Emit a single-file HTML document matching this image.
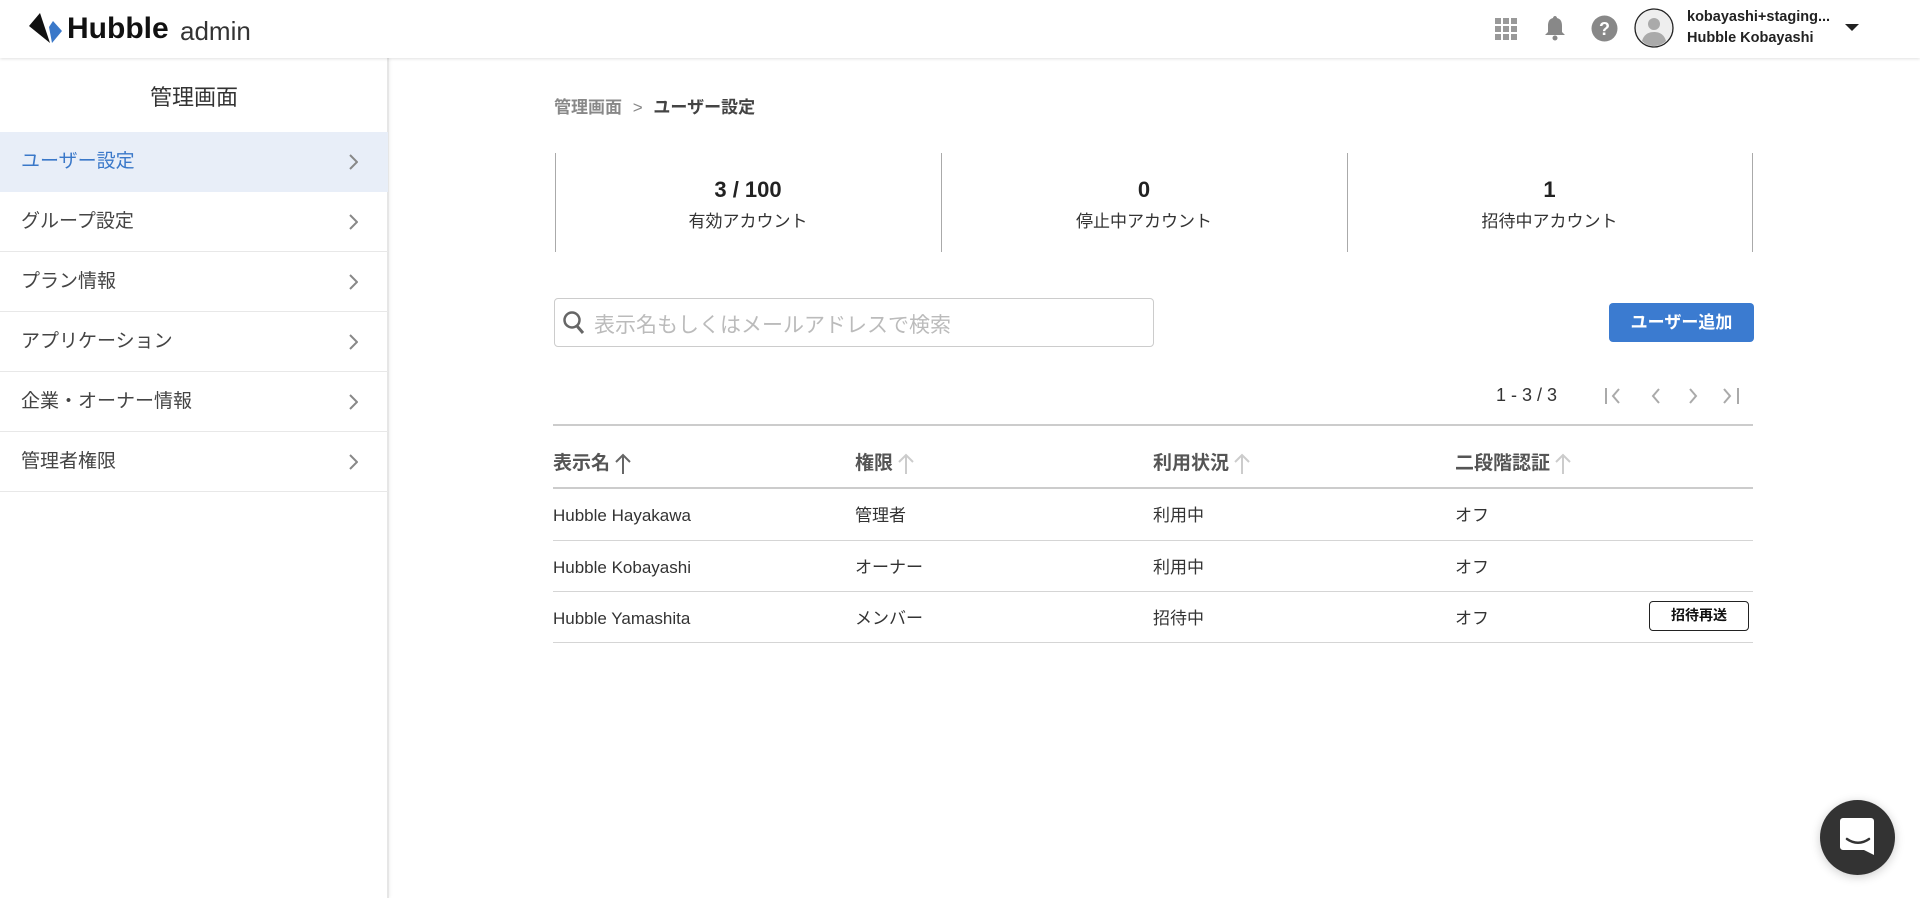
<!DOCTYPE html>
<html><head><meta charset="utf-8"><style>
*{box-sizing:border-box;margin:0;padding:0}
body{width:1920px;height:898px;background:#fff;font-family:"Liberation Sans","Noto Sans CJK JP",sans-serif;color:#333;position:relative;overflow:hidden}
.hdr{position:absolute;left:0;top:0;width:1920px;height:58px;background:#fff;box-shadow:0 1px 3px rgba(0,0,0,.12);z-index:2}
.side{position:absolute;left:0;top:58px;width:389px;height:840px;border-right:2px solid #e6e6e6;box-shadow:1px 0 3px rgba(0,0,0,.06)}
.st{position:absolute;top:22px;left:0;width:388px;text-align:center;font-size:22px;color:#333}
.nav{position:absolute;left:0;width:388px;height:60px;border-bottom:1px solid #e8e8e8;font-size:19px;line-height:60px;padding-left:21px;color:#444}
.nav.act{background:#e8eef8;color:#3a78c9;border-bottom:none}
.nav svg{position:absolute;left:348px;top:22px}
.a{position:absolute}
.num{font-weight:bold;font-size:22px;color:#222;text-align:center}
.lbl{font-size:17px;color:#333;text-align:center;line-height:20px}
.vl{position:absolute;top:153px;width:1px;height:99px;background:#aaa}
.hl{position:absolute;left:553px;width:1200px;height:1px;background:#d5d5d5}
.th{position:absolute;top:451px;font-size:19px;font-weight:bold;color:#555;line-height:26px;display:flex;align-items:center}
.th svg{margin-left:4px}
.td{position:absolute;font-size:17px;color:#333;line-height:22px;height:22px}
</style></head><body>
<div class="hdr">
 <svg class="a" style="left:29px;top:13px" width="34" height="31" viewBox="0 0 34 31"><polygon points="0,13 11,0 21,30" fill="#111"/><polygon points="20,14 24,8 33,18 23,30" fill="#3a78c9"/></svg>
 <div class="a" style="left:67px;top:12px;font-size:30px;font-weight:bold;color:#111">Hubble</div>
 <div class="a" style="left:180px;top:16px;font-size:26px;color:#333">admin</div>
 <svg class="a" style="left:1495px;top:18px" width="22" height="22" viewBox="0 0 22 22" fill="#999"><rect x="0" y="0" width="6" height="6"/><rect x="8" y="0" width="6" height="6"/><rect x="16" y="0" width="6" height="6"/><rect x="0" y="8" width="6" height="6"/><rect x="8" y="8" width="6" height="6"/><rect x="16" y="8" width="6" height="6"/><rect x="0" y="16" width="6" height="6"/><rect x="8" y="16" width="6" height="6"/><rect x="16" y="16" width="6" height="6"/></svg>
 <svg class="a" style="left:1544px;top:15px" width="22" height="26" viewBox="0 0 22 26" fill="#888"><path d="M11 1c1 0 2 1 2 2 4 1 5 4 5 8v6l3 3H1l3-3v-6c0-4 1-7 5-8 0-1 1-2 2-2z"/><circle cx="11" cy="23" r="2.5"/></svg>
 <svg class="a" style="left:1591px;top:15px" width="27" height="27" viewBox="0 0 27 27"><circle cx="13.5" cy="13.5" r="13" fill="#888"/><text x="13.5" y="20" text-anchor="middle" font-size="18" font-weight="bold" fill="#fff" font-family="Liberation Sans">?</text></svg>
 <svg class="a" style="left:1634px;top:8px" width="40" height="40" viewBox="0 0 40 40"><circle cx="20" cy="20" r="19" fill="#eee" stroke="#222" stroke-width="1.3"/><circle cx="20" cy="16" r="6" fill="#aaa"/><path d="M8 33c2-7 7-9 12-9s10 2 12 9c-3 3-7 5-12 5s-9-2-12-5z" fill="#aaa"/></svg>
 <div class="a" style="left:1687px;top:7px;font-size:14.5px;font-weight:bold;color:#222;line-height:21px">kobayashi+staging...<br>Hubble Kobayashi</div>
 <svg class="a" style="left:1845px;top:24px" width="14" height="8"><polygon points="0,0 14,0 7,7" fill="#222"/></svg>
</div>
<div class="side">
 <div class="st">管理画面</div>
 <div class="nav act" style="top:74px">ユーザー設定<svg width="10" height="16"><path d="M2 1l7 7-7 7" stroke="#888" stroke-width="2" fill="none"/></svg></div>
 <div class="nav" style="top:134px">グループ設定<svg width="10" height="16"><path d="M2 1l7 7-7 7" stroke="#888" stroke-width="2" fill="none"/></svg></div>
 <div class="nav" style="top:194px">プラン情報<svg width="10" height="16"><path d="M2 1l7 7-7 7" stroke="#888" stroke-width="2" fill="none"/></svg></div>
 <div class="nav" style="top:254px">アプリケーション<svg width="10" height="16"><path d="M2 1l7 7-7 7" stroke="#888" stroke-width="2" fill="none"/></svg></div>
 <div class="nav" style="top:314px">企業・オーナー情報<svg width="10" height="16"><path d="M2 1l7 7-7 7" stroke="#888" stroke-width="2" fill="none"/></svg></div>
 <div class="nav" style="top:374px">管理者権限<svg width="10" height="16"><path d="M2 1l7 7-7 7" stroke="#888" stroke-width="2" fill="none"/></svg></div>
</div>
<div class="a" style="left:554px;top:98px;font-size:17px;color:#888;font-weight:bold;line-height:20px">管理画面 <span style="margin:0 6px;font-weight:normal">&gt;</span> <span style="color:#444">ユーザー設定</span></div>
<div class="vl" style="left:555px"></div><div class="vl" style="left:941px"></div><div class="vl" style="left:1347px"></div><div class="vl" style="left:1752px"></div>
<div class="a num" style="left:555px;width:386px;top:177px">3 / 100</div>
<div class="a num" style="left:941px;width:406px;top:177px">0</div>
<div class="a num" style="left:1347px;width:405px;top:177px">1</div>
<div class="a lbl" style="left:555px;width:386px;top:212px">有効アカウント</div>
<div class="a lbl" style="left:941px;width:406px;top:212px">停止中アカウント</div>
<div class="a lbl" style="left:1347px;width:405px;top:212px">招待中アカウント</div>
<div class="a" style="left:554px;top:298px;width:600px;height:49px;border:1.5px solid #ccc;border-radius:4px"></div>
<svg class="a" style="left:562px;top:310px" width="24" height="26" viewBox="0 0 24 26"><circle cx="10" cy="10" r="7.5" stroke="#666" stroke-width="2.5" fill="none"/><path d="M15 16l6 7" stroke="#666" stroke-width="3"/></svg>
<div class="a" style="left:594px;top:309px;font-size:21px;color:#bbb">表示名もしくはメールアドレスで検索</div>
<div class="a" style="left:1609px;top:303px;width:145px;height:39px;background:#3b7bd0;border-radius:4px;color:#fff;font-weight:bold;font-size:17px;line-height:39px;text-align:center">ユーザー追加</div>
<div class="a" style="left:1496px;top:385px;font-size:18px;color:#333">1 - 3 / 3</div>
<svg class="a" style="left:1604px;top:386px" width="140" height="20" viewBox="0 0 140 20" fill="none" stroke="#aaa" stroke-width="2"><path d="M2 2v16M15 3l-6 7 6 7"/><path d="M55 3l-6 7 6 7"/><path d="M86 3l6 7-6 7"/><path d="M120 3l6 7-6 7M134 2v16"/></svg>
<div class="hl" style="top:424px;height:2px;background:#ccc"></div>
<div class="th" style="left:553px">表示名<svg width="18" height="22" viewBox="0 0 18 22" fill="none" stroke="#666" stroke-width="2"><path d="M9 21V2M2 9l7-7 7 7"/></svg></div>
<div class="th" style="left:855px">権限<svg width="18" height="22" viewBox="0 0 18 22" fill="none" stroke="#ccc" stroke-width="2"><path d="M9 21V2M2 9l7-7 7 7"/></svg></div>
<div class="th" style="left:1153px">利用状況<svg width="18" height="22" viewBox="0 0 18 22" fill="none" stroke="#ccc" stroke-width="2"><path d="M9 21V2M2 9l7-7 7 7"/></svg></div>
<div class="th" style="left:1455px">二段階認証<svg width="18" height="22" viewBox="0 0 18 22" fill="none" stroke="#ccc" stroke-width="2"><path d="M9 21V2M2 9l7-7 7 7"/></svg></div>
<div class="hl" style="top:487px;height:2px;background:#ccc"></div>
<div class="td" style="left:553px;top:505px">Hubble Hayakawa</div><div class="td" style="left:855px;top:505px">管理者</div><div class="td" style="left:1153px;top:505px">利用中</div><div class="td" style="left:1455px;top:505px">オフ</div>
<div class="hl" style="top:540px"></div>
<div class="td" style="left:553px;top:557px">Hubble Kobayashi</div><div class="td" style="left:855px;top:557px">オーナー</div><div class="td" style="left:1153px;top:557px">利用中</div><div class="td" style="left:1455px;top:557px">オフ</div>
<div class="hl" style="top:591px"></div>
<div class="td" style="left:553px;top:608px">Hubble Yamashita</div><div class="td" style="left:855px;top:608px">メンバー</div><div class="td" style="left:1153px;top:608px">招待中</div><div class="td" style="left:1455px;top:608px">オフ</div>
<div class="a" style="left:1649px;top:601px;width:100px;height:30px;border:1.5px solid #222;border-radius:4px;font-size:14px;font-weight:bold;line-height:27px;text-align:center;color:#111">招待再送</div>
<div class="hl" style="top:642px"></div>
<div class="a" style="left:1820px;top:800px;width:75px;height:75px;border-radius:50%;background:#333;box-shadow:0 2px 10px rgba(0,0,0,.2)"></div>
<svg class="a" style="left:1840px;top:818px" width="36" height="40" viewBox="0 0 36 40"><path d="M3 0h28a3 3 0 0 1 3 3v34l-10-5H3a3 3 0 0 1-3-3V3a3 3 0 0 1 3-3z" fill="#fff"/><path d="M7 21c7 5 15 5 22 0" stroke="#333" stroke-width="2.5" fill="none" stroke-linecap="round"/></svg>
</body></html>
